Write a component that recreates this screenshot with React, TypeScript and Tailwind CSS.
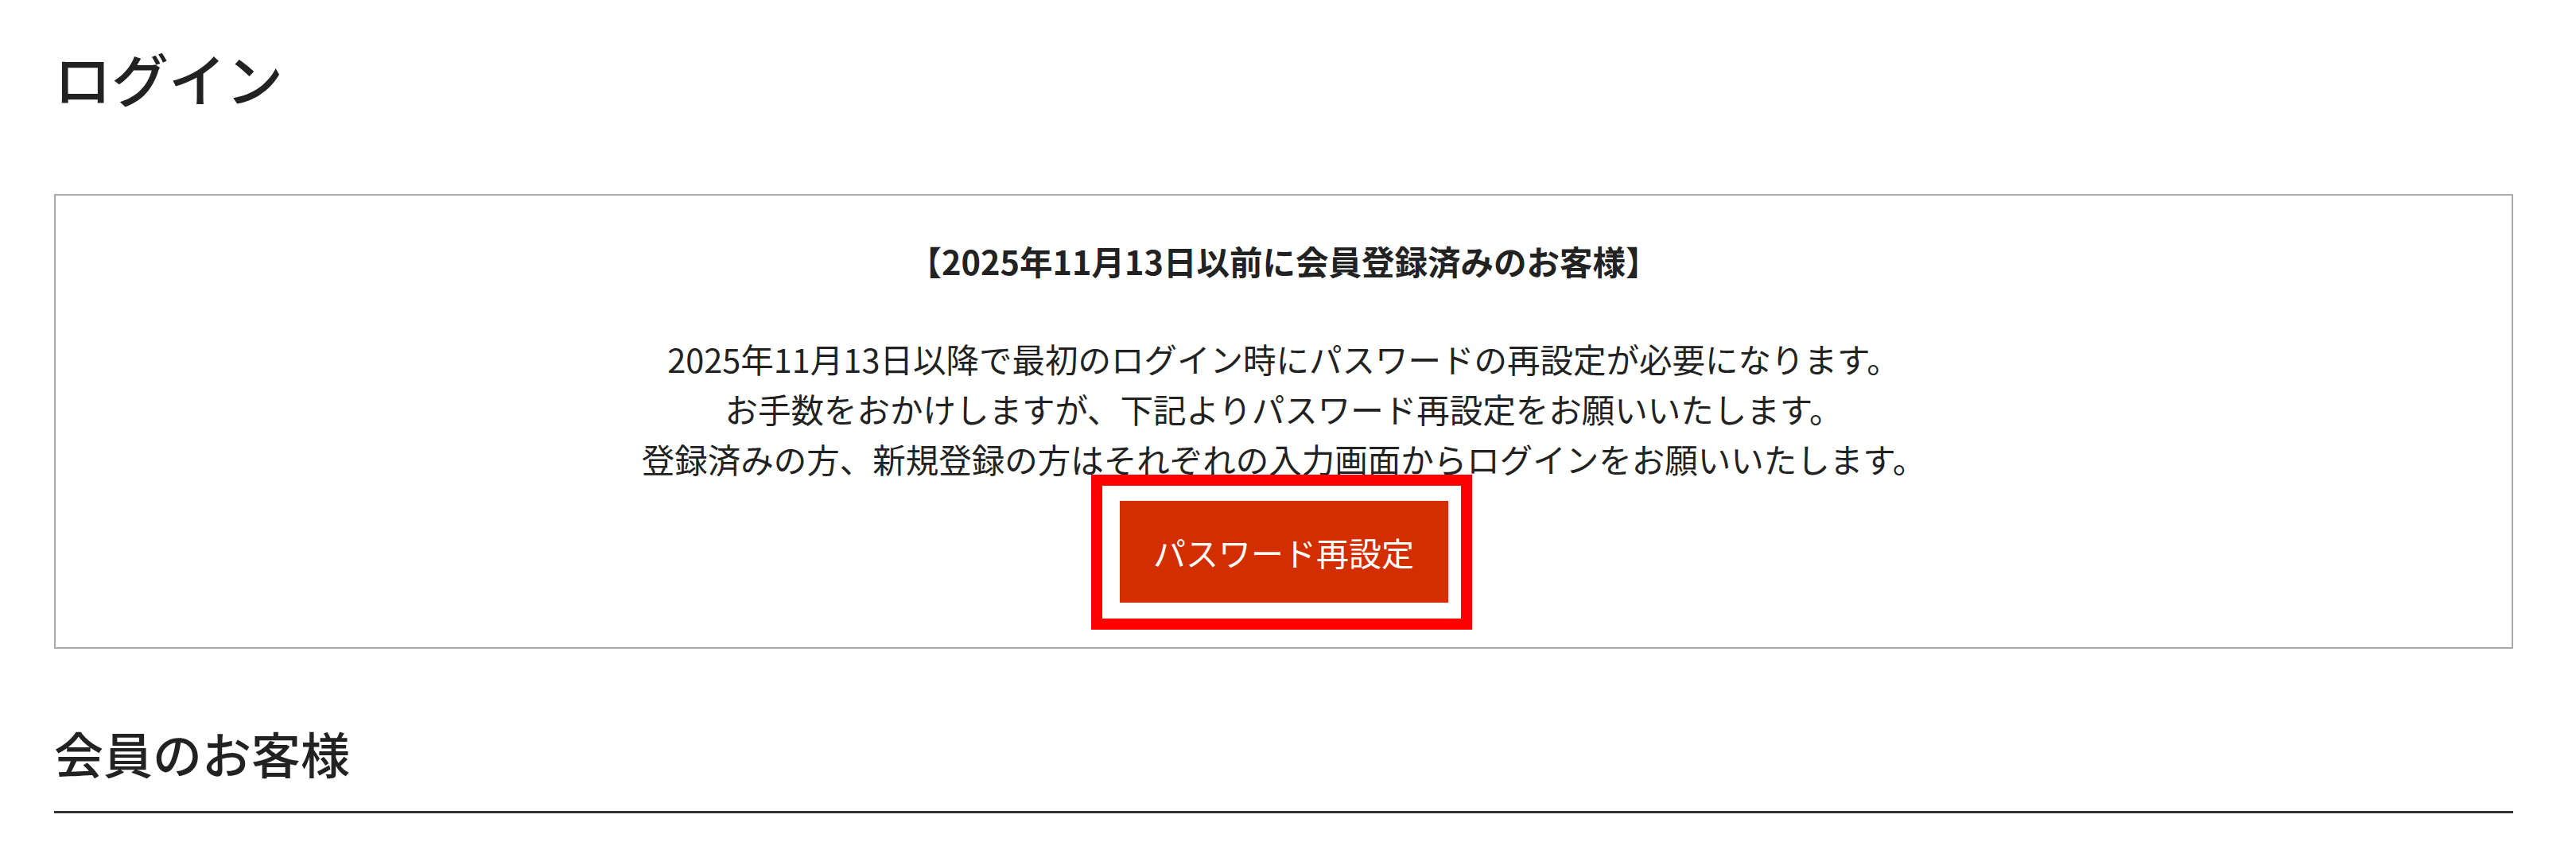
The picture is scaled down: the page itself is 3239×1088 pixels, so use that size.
export default function App() {
  return (
    <div
      className="min-h-screen bg-white text-[#222] ml-[68px] w-[3092px] pt-[43px]"
      style={{ fontFamily: '"Noto Sans CJK JP", "Noto Sans", sans-serif' }}
    >
      <h1 className="text-[72px] leading-[108px] font-medium">ログイン</h1>

      <div className="mt-[93px] border-2 border-[#aaa] pt-[51px] pb-[56px] flex flex-col items-center text-[41.5px] leading-[63px]">
        <p className="font-bold">【2025年11月13日以前に会員登録済みのお客様】</p>
        <div className="mt-[60px] text-center">
          <p>2025年11月13日以降で最初のログイン時にパスワードの再設定が必要になります。</p>
          <p>お手数をおかけしますが、下記よりパスワード再設定をお願いいたします。</p>
          <p>登録済みの方、新規登録の方はそれぞれの入力画面からログインをお願いいたします。</p>
        </div>
        <div className="relative mt-[21px]">
          <button className="w-[413px] h-[128px] bg-[#d22e00] text-white text-[41px] flex items-center justify-center">
            パスワード再設定
          </button>
          {/* highlight frame */}
          <span className="absolute left-[-36px] right-[-30px] top-[-33px] bottom-[-34px] border-[14px] border-[#ff0000] pointer-events-none" />
        </div>
      </div>

      <h2 className="mt-[85px] text-[62px] leading-[93px] font-medium pb-[26px] border-b-[3px] border-[#333]">
        会員のお客様
      </h2>
    </div>
  );
}
